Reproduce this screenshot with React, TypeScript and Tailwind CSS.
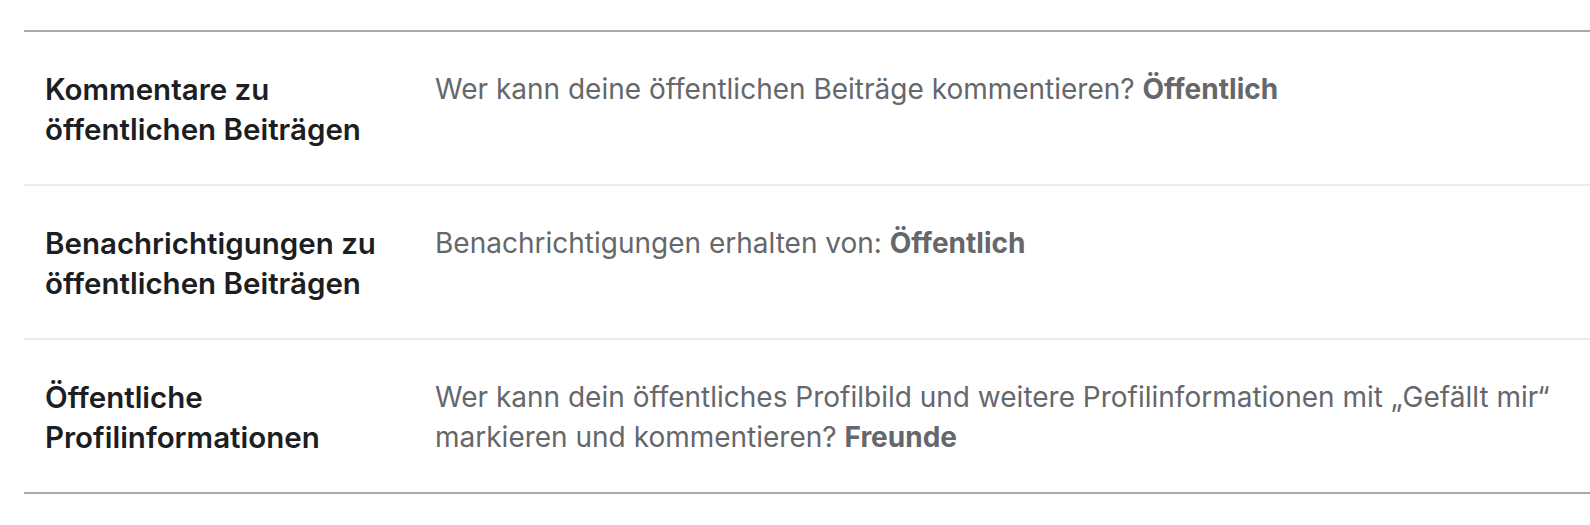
const rows: { label: string[]; text: React.ReactNode }[] = [
  {
    label: ['Kommentare zu', 'öffentlichen Beiträgen'],
    text: (
      <>
        Wer kann deine öffentlichen Beiträge kommentieren? <span className="font-bold">Öffentlich</span>
      </>
    ),
  },
  {
    label: ['Benachrichtigungen zu', 'öffentlichen Beiträgen'],
    text: (
      <>
        Benachrichtigungen erhalten von: <span className="font-bold">Öffentlich</span>
      </>
    ),
  },
  {
    label: ['Öffentliche', 'Profilinformationen'],
    text: (
      <>
        Wer kann dein öffentliches Profilbild und weitere Profilinformationen mit „Gefällt mir“ markieren und
        kommentieren? <span className="font-bold">Freunde</span>
      </>
    ),
  },
];

export default function App() {
  return (
    <div className="min-h-screen bg-white pt-[30px] pl-[24px] font-['Inter','Liberation_Sans',sans-serif]">
      <div className="border-y-2 border-[#a9a9a9]">
        {rows.map((row, i) => (
          <div
            key={i}
            className={
              i < rows.length - 1
                ? 'grid grid-cols-[390px_1fr] border-b-2 border-[#ebebef] pt-[37px] pb-[35px] pl-[21px] pr-[16px] leading-[40px]'
                : 'grid grid-cols-[390px_1fr] pt-[37px] pb-[35px] pl-[21px] pr-[16px] leading-[40px]'
            }
          >
            {/* label */}
            <div className="pr-[24px] text-[29.5px] font-semibold text-[#1c1e21]">
              {row.label.map((l) => (
                <div key={l}>{l}</div>
              ))}
            </div>
            <div className="text-[28px] text-[#65676b]">{row.text}</div>
          </div>
        ))}
      </div>
    </div>
  );
}
